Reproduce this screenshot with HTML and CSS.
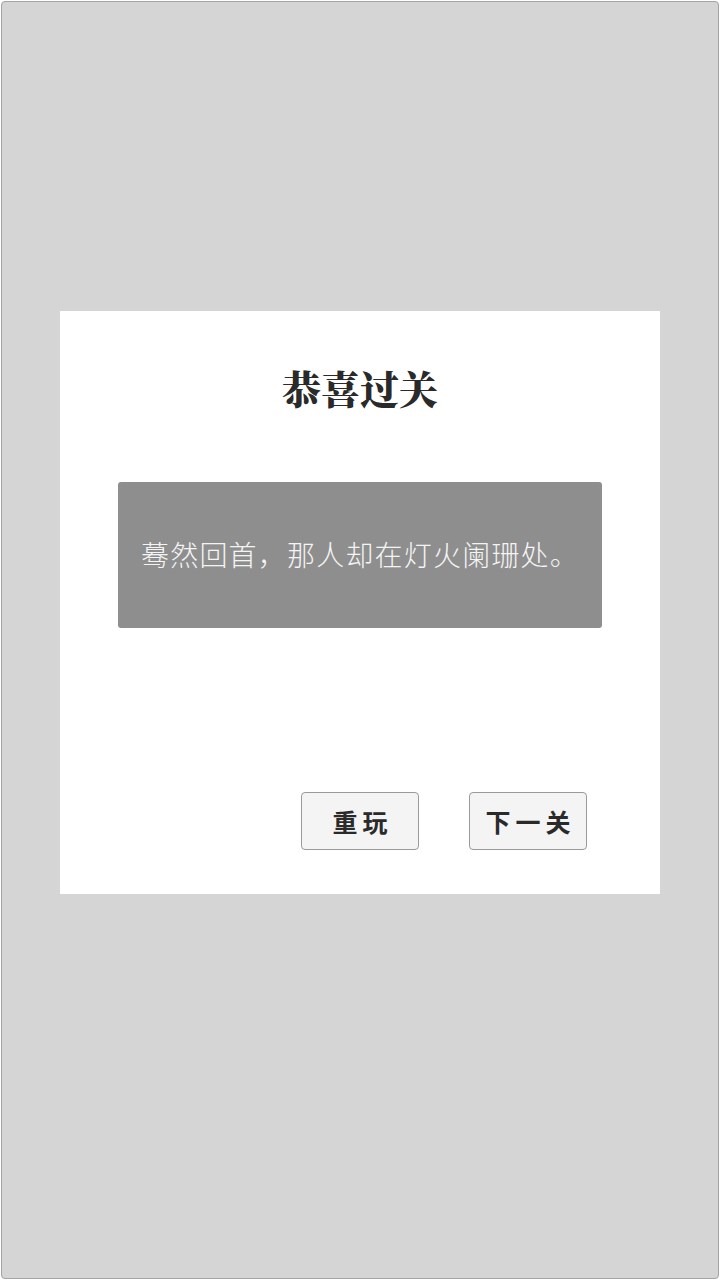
FILE: index.html
```html
<!DOCTYPE html>
<html lang="zh">
<head>
<meta charset="utf-8">
<link rel="stylesheet" href="styles.css">
</head>
<body>
<div class="frame">
  <div class="dialog">
    <h1 class="title">恭喜过关</h1>
    <div class="message">蓦然回首，那人却在灯火阑珊处。</div>
    <div class="actions">
      <button class="btn">重玩</button>
      <button class="btn">下一关</button>
    </div>
  </div>
</div>
</body>
</html>
```
FILE: styles.css
```css
html, body {
  margin: 0;
  padding: 0;
  background: #ffffff;
}
body {
  padding: 1px;
  font-family: "Noto Sans CJK SC", "Noto Sans", sans-serif;
}
.frame {
  box-sizing: border-box;
  height: 1278px;
  border: 1px solid #a3a3a3;
  border-radius: 4px;
  background: #d5d5d5;
  padding-top: 309px;
  padding-left: 58px;
}
.dialog {
  box-sizing: border-box;
  width: 600px;
  height: 583px;
  background: #ffffff;
  padding: 52px 58px 0;
  display: flex;
  flex-direction: column;
}
.title {
  margin: 0;
  height: 48px;
  line-height: 48px;
  text-align: center;
  font-size: 39px;
  font-weight: 900;
  color: #2a2a2a;
  font-family: "Noto Serif CJK SC", "Noto Sans CJK SC", serif;
}
.message {
  margin-top: 71px;
  height: 146px;
  border-radius: 3px;
  background: #8e8e8e;
  color: #f4f4f4;
  font-size: 28px;
  font-weight: 300;
  display: flex;
  align-items: center;
  justify-content: center;
  letter-spacing: 1.2px;
  padding-bottom: 3px;
  box-sizing: border-box;
}
.actions {
  margin-top: 164px;
  display: flex;
  justify-content: flex-end;
  gap: 50px;
  padding-right: 15px;
}
.btn {
  box-sizing: border-box;
  width: 118px;
  height: 58px;
  border: 1px solid #9a9a9a;
  border-radius: 4px;
  background: #f4f4f4;
  color: #2a2a2a;
  font-family: "Noto Sans CJK SC", sans-serif;
  font-size: 25px;
  font-weight: 700;
  letter-spacing: 5px;
  padding: 0 0 0 5px;
}
```
